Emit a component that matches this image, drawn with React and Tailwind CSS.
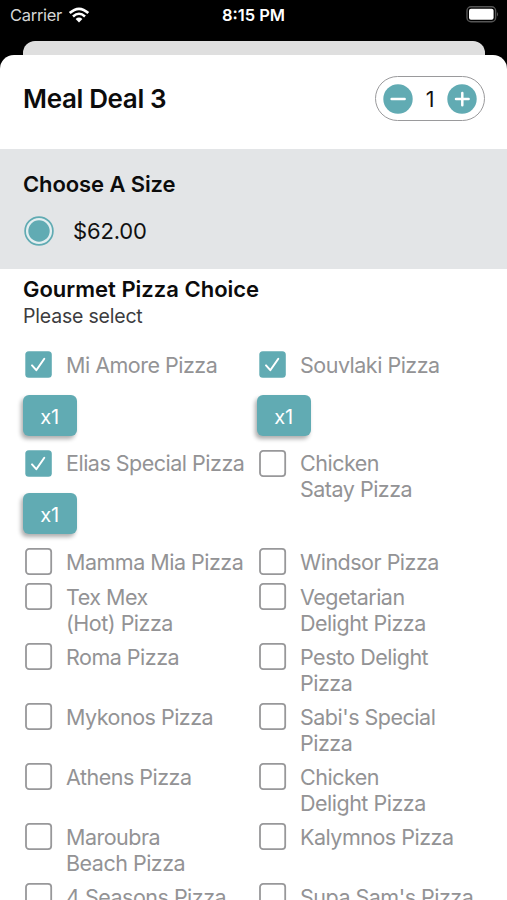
const rows = [
  { h: 'h-[98.5px]', items: [
    { lines: ['Mi Amore Pizza'], checked: true },
    { lines: ['Souvlaki Pizza'], checked: true },
  ] },
  { h: 'h-[98.5px]', items: [
    { lines: ['Elias Special Pizza'], checked: true },
    { lines: ['Chicken', 'Satay Pizza'] },
  ] },
  { h: 'h-[35px]', items: [{ lines: ['Mamma Mia Pizza'] }, { lines: ['Windsor Pizza'] }] },
  { h: 'h-[60px]', items: [{ lines: ['Tex Mex', '(Hot) Pizza'] }, { lines: ['Vegetarian', 'Delight Pizza'] }] },
  { h: 'h-[60px]', items: [{ lines: ['Roma Pizza'] }, { lines: ['Pesto Delight', 'Pizza'] }] },
  { h: 'h-[60px]', items: [{ lines: ['Mykonos Pizza'] }, { lines: ["Sabi's Special", 'Pizza'] }] },
  { h: 'h-[60px]', items: [{ lines: ['Athens Pizza'] }, { lines: ['Chicken', 'Delight Pizza'] }] },
  { h: 'h-[60px]', items: [{ lines: ['Maroubra', 'Beach Pizza'] }, { lines: ['Kalymnos Pizza'] }] },
  { h: 'h-[60px]', items: [{ lines: ['4 Seasons Pizza'] }, { lines: ["Supa Sam's Pizza"] }] },
];

function Checkbox({ checked }) {
  return (
    <svg className="mt-px ml-[2px] h-[28px] w-[28px] shrink-0" viewBox="0 0 28 28" fill="none">
      {checked ? (
        <>
          <rect x="0.3" y="0.2" width="26.5" height="26.5" rx="3.5" fill="#61abb3" />
          <path d="M7 14.4l4.3 4.8 8-11.4" stroke="#fff" strokeWidth="2" strokeLinecap="round" strokeLinejoin="round" />
        </>
      ) : (
        <rect x="1" y="0.9" width="25.2" height="25.2" rx="3.2" stroke="#98989a" strokeWidth="1.8" />
      )}
    </svg>
  );
}

function Item({ lines, checked }) {
  return (
    <div className="w-[234px] shrink-0">
      <div className="flex gap-[13px]">
        <Checkbox checked={checked} />
        <div className="pt-[1.5px] text-[21.5px] leading-[26.4px] tracking-[-0.5px] whitespace-nowrap text-[#939395]">
          {lines.map((line) => (
            <div key={line}>{line}</div>
          ))}
        </div>
      </div>
      {checked && (
        <div className="mt-[15.5px] -ml-[0.5px] flex h-[41px] w-[54px] items-center justify-center rounded-[6px] bg-[#61abb3] pt-[3px] text-[20px] tracking-[-0.2px] text-white shadow-[-2px_3px_4px_rgba(0,0,0,0.32)]">
          x1
        </div>
      )}
    </div>
  );
}

function StatusBar() {
  return (
    <div className="flex h-[41px] items-start justify-between pt-[5px] pr-[8px] pl-[10px] text-white">
      <div className="flex w-[160px] items-center gap-[6px]">
        <span className="text-[16.5px] leading-[20px] tracking-[-0.3px] text-[#d6d6d6]">Carrier</span>
        <svg className="h-[16px] w-[22px]" viewBox="0 0 22 16">
          <path d="M1.7 6.1Q11-2.4 20.3 6.1" fill="none" stroke="#fff" strokeWidth="2.7" />
          <path d="M5 9.5Q11 4 17 9.5" fill="none" stroke="#fff" strokeWidth="2.6" />
          <path d="M7.6 12Q11 9.2 14.4 12L11 15.5Z" fill="#fff" />
        </svg>
      </div>
      <span className="text-[16.5px] leading-[20px] font-semibold">8:15 PM</span>
      <div className="flex w-[162px] justify-end">
        <svg className="mt-px h-[17px] w-[33px]" viewBox="0 0 33 17">
          <rect x="1" y="0.8" width="28.6" height="15" rx="4" fill="none" stroke="#555" strokeWidth="1.4" />
          <rect x="3" y="2.8" width="24.6" height="11" rx="2" fill="#fff" />
          <path d="M31 6Q33 8.3 31 10.6Z" fill="#555" />
        </svg>
      </div>
    </div>
  );
}

function RoundButton({ plus }) {
  return (
    <svg className="h-[30px] w-[30px]" viewBox="0 0 30 30">
      <circle cx="15" cy="15" r="14.7" fill="#61abb3" />
      <path d={plus ? 'M9 15h12.6M15.3 8.9v12.4' : 'M8.6 15h13'} stroke="#fff" strokeWidth="2.5" strokeLinecap="round" />
    </svg>
  );
}

export default function App() {
  return (
    <div className="flex h-[900px] w-[507px] flex-col overflow-hidden bg-black font-['Inter','Liberation_Sans',sans-serif]">
      <StatusBar />
      <div className="mr-[22px] ml-[23px] h-[14px] shrink-0 rounded-t-[12px] bg-[#dfdfdf]" />
      <div className="h-[845px] shrink-0 overflow-hidden rounded-t-[14px] bg-white">
        <header className="flex h-[94px] items-center justify-between pr-[22px] pl-[23px] pb-[7px]">
          <h1 className="text-[26px] leading-[32px] font-semibold tracking-[-0.35px] text-[#0c0c0c]">Meal Deal 3</h1>
          <div className="flex h-[45px] w-[110px] items-center justify-between rounded-full border-[1.5px] border-[#9a9a9c] px-[7px]">
            <RoundButton />
            <span className="pt-px text-[21.5px] text-[#111]">1</span>
            <RoundButton plus />
          </div>
        </header>
        <section className="h-[120px] bg-[#e3e5e7] px-[23px] pt-[21px]">
          <h2 className="text-[22px] leading-[28px] font-semibold tracking-[-0.1px] text-[#0c0c0c]">Choose A Size</h2>
          <div className="mt-[18px] flex items-center gap-[19px]">
            <svg className="ml-px h-[30px] w-[30px]" viewBox="0 0 30 30">
              <circle cx="15" cy="15" r="13.9" fill="#e3eef0" stroke="#61abb3" strokeWidth="1.7" />
              <circle cx="15" cy="15" r="10.7" fill="#61abb3" />
            </svg>
            <span className="text-[22px] leading-[28px] tracking-[-0.15px] text-[#111]">$62.00</span>
          </div>
        </section>
        <section className="pt-[6px] pl-[23px]">
          <h2 className="text-[22px] leading-[28px] font-semibold text-[#0c0c0c]">Gourmet Pizza Choice</h2>
          <p className="pt-px text-[19.5px] leading-[25px] tracking-[-0.2px] text-[#3c3c3e]">Please select</p>
          <div className="mt-[21px]">
            {rows.map((row, i) => (
              <div key={i} className={`flex ${row.h}`}>
                {row.items.map((item) => (
                  <Item key={item.lines.join(' ')} {...item} />
                ))}
              </div>
            ))}
          </div>
        </section>
      </div>
    </div>
  );
}
